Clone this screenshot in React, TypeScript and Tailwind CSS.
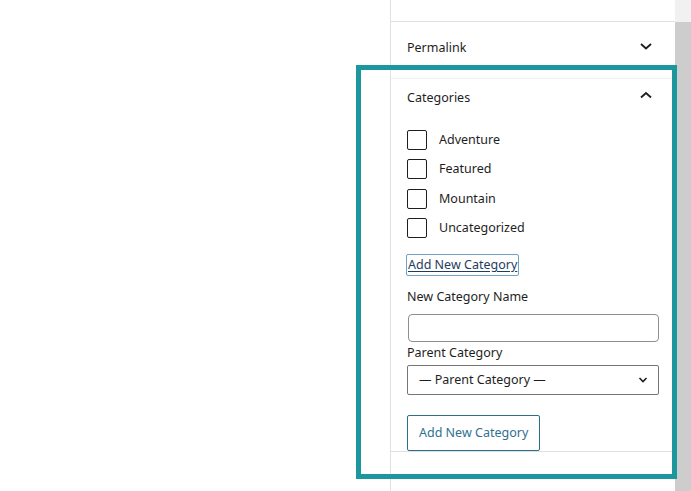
import React from "react";

const font = { fontFamily: '"Noto Sans", "Open Sans", sans-serif' };

function ChevronDown() {
  return (
    <svg width="14" height="10" viewBox="0 0 14 10" fill="none">
      <path d="M2 3 L7 7.5 L12 3" stroke="#1e1e1e" strokeWidth="1.8" />
    </svg>
  );
}

function ChevronUp() {
  return (
    <svg width="14" height="10" viewBox="0 0 14 10" fill="none">
      <path d="M2 7.5 L7 3 L12 7.5" stroke="#1e1e1e" strokeWidth="1.8" />
    </svg>
  );
}

const cats = ["Adventure", "Featured", "Mountain", "Uncategorized"];

export default function App() {
  return (
    <div
      className="relative flex h-[491px] w-[691px] overflow-hidden bg-white text-[12.5px] leading-[16px] text-[#1e1e1e]"
      style={font}
    >
      <div className="w-[390px] shrink-0 bg-white" />
      <div className="flex w-[285px] shrink-0 flex-col border-l border-[#e0e0e0]">
        <div className="h-[22px] shrink-0 border-b border-[#e0e0e0]" />
        <div className="flex h-[57px] shrink-0 items-start justify-between border-b border-[#f0f0f0] pl-[16px] pr-[22px] pt-[18px]">
          <span>Permalink</span>
          <span className="mt-[1px]"><ChevronDown /></span>
        </div>
        <div className="flex flex-col border-b border-[#e0e0e0] px-[16px]">
          <div className="flex items-start justify-between pr-[6px] pt-[11px]">
            <span>Categories</span>
            <span className="mt-[0px]"><ChevronUp /></span>
          </div>
          <div className="mt-[24px] flex flex-col gap-[9.3px]">
            {cats.map((c) => (
              <label key={c} className="flex items-center gap-[12px]">
                <span className="h-[20px] w-[20px] rounded-[2px] border border-[#1e1e1e] bg-white" />
                <span>{c}</span>
              </label>
            ))}
          </div>
          <div className="mt-[16px] flex">
            <span className="-ml-[1px] rounded-[2px] border border-[#6fa2c4] px-[1px] py-[1px] leading-[18px] text-[#1f3d5c] underline decoration-[#1f3d5c] underline-offset-[2px]">
              Add New Category
            </span>
          </div>
          <div className="mt-[13px]">New Category Name</div>
          <div className="ml-[1px] mt-[9px] h-[28px] rounded-[4px] border border-[#8c8f94] bg-white" />
          <div className="mt-[3px]">Parent Category</div>
          <div className="mt-[4px] flex h-[30px] items-center justify-between rounded-[2px] border border-[#757575] bg-white pl-[11px] pr-[10px]">
            <span>— Parent Category —</span>
            <svg width="10" height="8" viewBox="0 0 10 8" fill="none">
              <path d="M1.5 2 L5 5.5 L8.5 2" stroke="#1e1e1e" strokeWidth="1.6" />
            </svg>
          </div>
          <div className="mt-[20px] flex">
            <span className="flex h-[36px] items-center rounded-[2px] border border-[#2a6f8c] px-[11px] text-[#2f7190]">
              Add New Category
            </span>
          </div>
        </div>
      </div>
      <div className="flex w-[16px] shrink-0 flex-col">
        <div className="h-[22px] bg-[#f1f1f1]" />
        <div className="flex-1 bg-[#cdcdcd]" />
      </div>
      <div className="pointer-events-none absolute left-[356px] top-[65px] h-[414px] w-[321px] border-[5px] border-[#1b979d]" />
    </div>
  );
}
